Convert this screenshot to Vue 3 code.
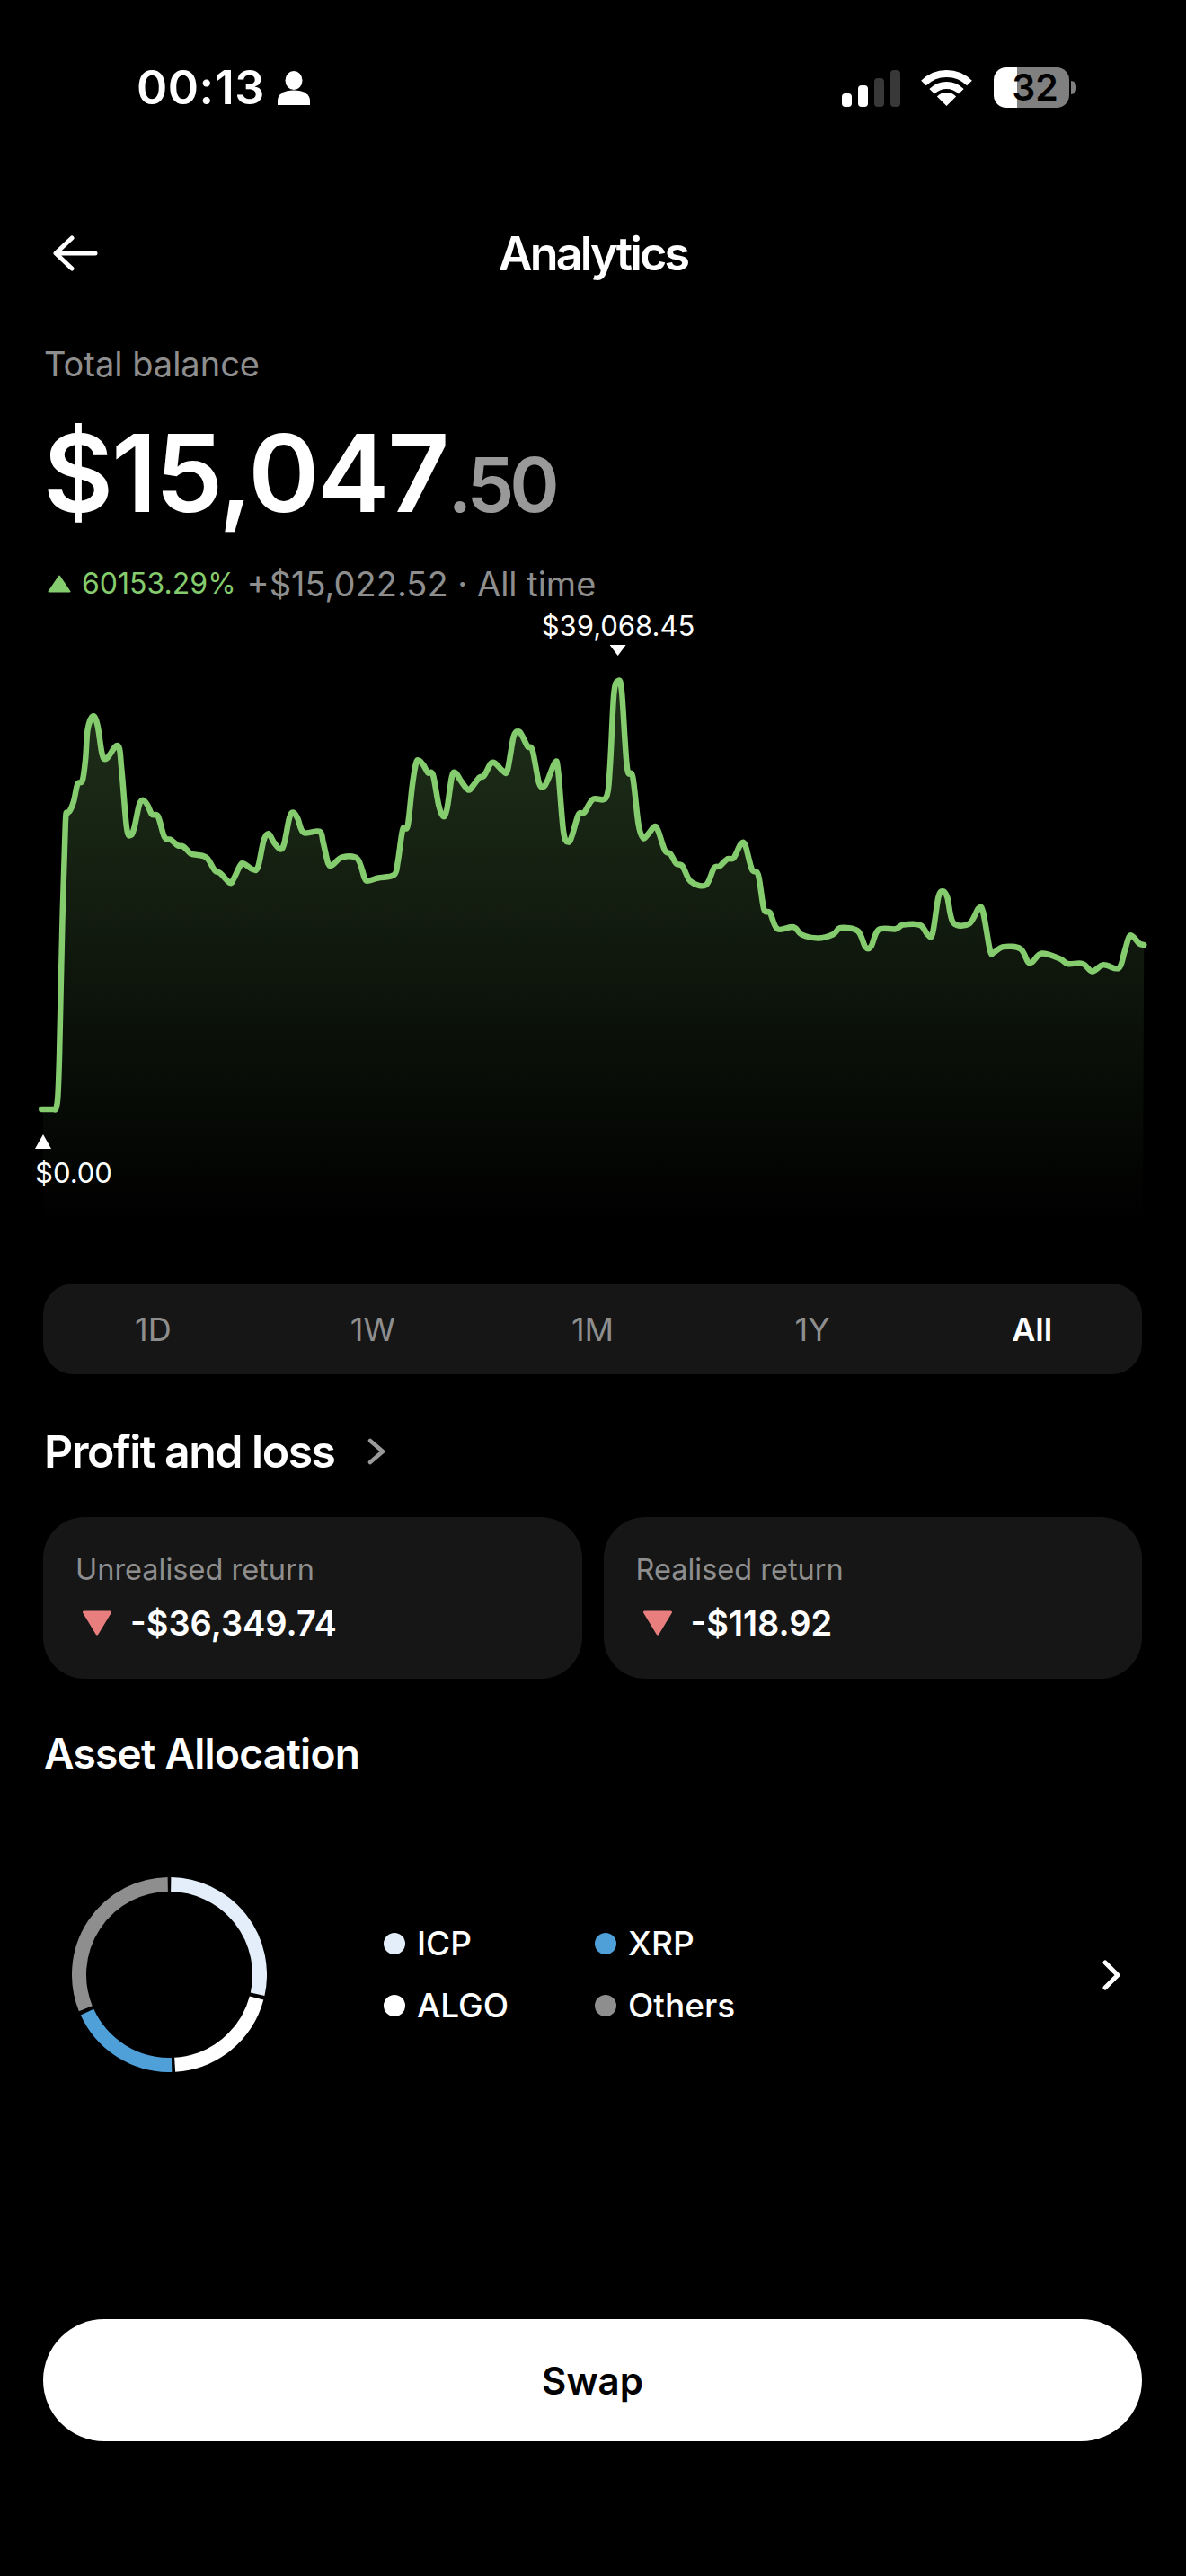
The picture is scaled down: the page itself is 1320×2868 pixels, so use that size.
<template>
  <div class="page">
    <header class="status">
      <div class="status-left">
        <span class="clock">00:13</span>
        <svg class="person" viewBox="0 0 36 38" width="36" height="38">
          <ellipse cx="18" cy="10.5" rx="9.5" ry="10.5" fill="#fff" />
          <path d="M0 38V33C0 26 7 21.5 18 21.5S36 26 36 33V38Z" fill="#fff" />
        </svg>
      </div>
      <div class="status-right">
        <div class="signal">
          <i class="bar on b1"></i>
          <i class="bar on b2"></i>
          <i class="bar b3"></i>
          <i class="bar b4"></i>
        </div>
        <svg class="wifi" viewBox="0 0 57 41" width="57" height="41">
          <path d="M3 15.5A36 36 0 0 1 54 15.5" fill="none" stroke="#fff" stroke-width="8" />
          <path d="M12.2 24.7A23 23 0 0 1 44.8 24.7" fill="none" stroke="#fff" stroke-width="8" />
          <path d="M28.5 41L17.9 30.4A15 15 0 0 1 39.1 30.4Z" fill="#fff" />
        </svg>
        <div class="battery">
          <div class="battery-body"><span>32</span></div>
          <i class="battery-nub"></i>
        </div>
      </div>
    </header>

    <nav class="nav">
      <svg class="back" viewBox="0 0 50 40" width="50" height="40">
        <path d="M47 20H4M21 3L3 20L21 37" fill="none" stroke="#fff" stroke-width="5" stroke-linecap="round" stroke-linejoin="round" />
      </svg>
      <h1 class="title">Analytics</h1>
    </nav>

    <div class="balance-label">Total balance</div>
    <div class="balance"><span>$15,047</span><span class="cents">.50</span></div>
    <div class="change">
      <svg viewBox="0 0 26 20" width="26" height="20">
        <path d="M13 1.5L24.5 18.5H1.5Z" fill="#85cc6e" stroke="#85cc6e" stroke-width="2" stroke-linejoin="round" />
      </svg>
      <span class="pct">60153.29%</span>
      <span class="abs">+$15,022.52 · All time</span>
    </div>

    <div class="chart">
      <svg viewBox="0 0 1320 710" width="1320" height="710">
        <defs>
          <linearGradient id="area" x1="0" y1="0" x2="0" y2="1">
            <stop offset="0" stop-color="#85cc6e" stop-opacity="0.24" />
            <stop offset="1" stop-color="#85cc6e" stop-opacity="0" />
          </linearGradient>
        </defs>
        <path :d="areaPath" fill="url(#area)" />
        <path :d="linePath" fill="none" stroke="#85cc6e" stroke-width="6.5" stroke-linecap="round" stroke-linejoin="round" />
      </svg>
      <div class="marker high">
        <span>$39,068.45</span>
        <svg viewBox="0 0 18 12" width="18" height="12"><path d="M0 0H18L9 12Z" fill="#fff" /></svg>
      </div>
      <div class="marker low">
        <svg viewBox="0 0 18 16" width="18" height="16"><path d="M0 16H18L9 0Z" fill="#fff" /></svg>
        <span>$0.00</span>
      </div>
    </div>

    <div class="ranges">
      <span v-for="r in ranges" :key="r" :class="{ active: r === 'All' }">{{ r }}</span>
    </div>

    <div class="section-head profit">
      <h2>Profit and loss</h2>
      <svg viewBox="0 0 20 30" width="20" height="30">
        <path d="M3 3L17 15L3 27" fill="none" stroke="#999" stroke-width="4.5" stroke-linecap="round" stroke-linejoin="round" />
      </svg>
    </div>

    <div class="cards">
      <div v-for="c in returns" :key="c.label" class="card">
        <div class="card-label">{{ c.label }}</div>
        <div class="card-value">
          <svg viewBox="0 0 34 28" width="34" height="28">
            <path d="M2.5 2H31.5L17 26Z" fill="#e87e7e" stroke="#e87e7e" stroke-width="3" stroke-linejoin="round" />
          </svg>
          <span>{{ c.value }}</span>
        </div>
      </div>
    </div>

    <div class="section-head asset">
      <h2>Asset Allocation</h2>
    </div>

    <div class="allocation">
      <svg class="donut" viewBox="0 0 217 217" width="217" height="217">
        <path v-for="s in segments" :key="s.color" :d="s.d" :stroke="s.color" fill="none" stroke-width="16" />
      </svg>
      <div class="legend">
        <div v-for="l in legend" :key="l.name" class="legend-item">
          <i :style="{ background: l.color }"></i>
          <span>{{ l.name }}</span>
        </div>
      </div>
      <svg class="more" viewBox="0 0 20 34" width="20" height="34">
        <path d="M3 3L17 17L3 31" fill="none" stroke="#fff" stroke-width="5" stroke-linecap="round" stroke-linejoin="round" />
      </svg>
    </div>

    <button class="swap">Swap</button>
  </div>
</template>

<script setup>
const ranges = ['1D', '1W', '1M', '1Y', 'All']

const returns = [
  { label: 'Unrealised return', value: '-$36,349.74' },
  { label: 'Realised return', value: '-$118.92' }
]

const legend = [
  { name: 'ICP', color: '#e4eefa' },
  { name: 'XRP', color: '#4f9fd8' },
  { name: 'ALGO', color: '#ffffff' },
  { name: 'Others', color: '#8e8e8e' }
]

// chart points traced from the two halves of the reference
const leftHalf = [
  [110,1295],[125,1295],[140,1295],[148,1293],[153,1260],[157,1150],[165,800],[173,540],[178,512],[185,505],[195,480],[205,435],[218,425],[226,370],[232,290],[246,255],
  [258,280],[270,355],[282,367],[312,333],[322,400],[335,550],[346,570],[355,550],[368,490],[378,477],
  [390,490],[402,515],[418,520],[435,575],[452,582],[470,597],[485,600],[505,619],[522,622],[547,630],
  [568,663],[582,670],[608,696],[618,685],[635,650],[645,645],[668,660],[682,655],[697,585],[710,566],
  [725,590],[742,607],[752,590],[765,525],[775,510],[787,525],[803,563],[845,560],[855,590],[868,645],
  [880,648],[905,628],[945,632],[965,685],[975,690],[1000,683],[1042,675],[1052,640],[1065,555],[1078,545],
  [1090,440],[1100,380],[1108,372],[1120,385],[1132,405],[1145,410],[1160,490],[1172,520],[1182,500],[1195,415],
  [1205,405],[1218,425],[1238,450],[1250,440],[1268,417],[1280,413],[1298,380],[1310,380],[1330,400],[1342,398],
  [1358,310],[1370,295],[1380,305],[1395,335],[1408,345],[1425,430],[1437,442],[1448,425],[1468,377],[1476,400],
  [1490,560],[1503,588],[1513,570],[1530,515],[1545,510],[1568,475]
]
const rightHalf = [
  [35,470],[45,390],[55,200],[66,162],[76,190],[90,390],[105,415],[120,540],[132,577],[145,568],
  [163,547],[173,560],[190,610],[205,620],[220,645],[237,652],[258,692],[298,702],[320,657],[335,652],
  [355,633],[372,630],[390,595],[402,595],[420,660],[437,675],[452,765],[468,775],[488,818],[530,813],
  [552,833],[595,842],[635,832],[655,815],[700,823],[720,865],[735,865],[755,820],[800,818],[820,807],
  [865,808],[885,833],[898,830],[913,735],[925,718],[937,735],[953,802],[995,804],[1020,763],[1032,775],
  [1050,875],[1060,880],[1085,865],[1130,870],[1150,905],[1162,905],[1187,883],[1235,897],[1255,910],[1295,910],
  [1320,930],[1350,913],[1390,922],[1405,880],[1418,838],[1430,840],[1445,857],[1457,860]
]

const scale = 2.376
const points = [
  ...leftHalf.map(([x, y]) => [x / scale, y / scale]),
  ...rightHalf.map(([x, y]) => [660 + x / scale, y / scale])
]

function smooth(pts) {
  let d = `M${pts[0][0].toFixed(1)} ${pts[0][1].toFixed(1)}`
  for (let i = 0; i < pts.length - 1; i++) {
    const p0 = pts[i - 1] || pts[i]
    const p1 = pts[i]
    const p2 = pts[i + 1]
    const p3 = pts[i + 2] || p2
    const c1x = p1[0] + (p2[0] - p0[0]) / 6
    const c1y = p1[1] + (p2[1] - p0[1]) / 6
    const c2x = p2[0] - (p3[0] - p1[0]) / 6
    const c2y = p2[1] - (p3[1] - p1[1]) / 6
    d += `C${c1x.toFixed(1)} ${c1y.toFixed(1)} ${c2x.toFixed(1)} ${c2y.toFixed(1)} ${p2[0].toFixed(1)} ${p2[1].toFixed(1)}`
  }
  return d
}

const linePath = smooth(points)
const areaPath = `${linePath}L1272 670L48 670L48 ${points[0][1].toFixed(1)}Z`

function arc(from, to) {
  const r = 100.5
  const c = 108.5
  const pt = a => {
    const t = (a * Math.PI) / 180
    return `${(c + r * Math.sin(t)).toFixed(2)} ${(c - r * Math.cos(t)).toFixed(2)}`
  }
  const large = to - from > 180 ? 1 : 0
  return `M${pt(from)}A${r} ${r} 0 ${large} 1 ${pt(to)}`
}

const segments = [
  { color: '#e4eefa', d: arc(1, 102.5) },
  { color: '#ffffff', d: arc(105, 176.5) },
  { color: '#4f9fd8', d: arc(178.5, 245.5) },
  { color: '#8e8e8e', d: arc(248, 359) }
]
</script>

<style scoped>
.page {
  width: 1320px;
  height: 2868px;
  background: #000;
  color: #fff;
  font-family: Inter, "Liberation Sans", sans-serif;
  overflow: hidden;
}

.status {
  height: 195px;
  display: flex;
  align-items: center;
  justify-content: space-between;
  padding: 0 122px 0 152px;
}

.status-left {
  display: flex;
  align-items: center;
  gap: 14px;
}

.clock {
  font-size: 52px;
  font-weight: 600;
  line-height: 60px;
  letter-spacing: 0.5px;
}

.status-right {
  display: flex;
  align-items: center;
}

.signal {
  display: flex;
  align-items: flex-end;
  gap: 7px;
  height: 41px;
  margin-top: 1px;
}

.bar {
  display: block;
  width: 11px;
  border-radius: 4px;
  background: #383838;
}
.bar.on { background: #fff; }
.b1 { height: 15px; }
.b2 { height: 24px; }
.b3 { height: 32px; }
.b4 { height: 41px; }

.wifi {
  margin-left: 23px;
}

.battery {
  display: flex;
  align-items: center;
  margin-left: 24px;
}

.battery-body {
  width: 84px;
  height: 45px;
  border-radius: 14px;
  background: linear-gradient(90deg, #fff 0 26px, #808080 26px);
  display: flex;
  align-items: center;
  justify-content: center;
}

.battery-body span {
  color: #000;
  font-size: 41px;
  font-weight: 600;
  line-height: 45px;
  margin-left: 8px;
}

.battery-nub {
  display: block;
  width: 6px;
  height: 15px;
  margin-left: 2px;
  border-radius: 0 6px 6px 0;
  background: #808080;
}

.nav {
  position: relative;
  height: 85px;
  margin-top: 45px;
  display: flex;
  align-items: center;
  justify-content: center;
}

.back {
  position: absolute;
  left: 59px;
  top: 22px;
}

.title {
  margin: 0;
  font-size: 52px;
  font-weight: 600;
  line-height: 85px;
  letter-spacing: -2.8px;
}

.balance-label {
  margin: 60px 0 0 49px;
  font-size: 38px;
  line-height: 40px;
  color: #8e8e8e;
}

.balance {
  margin: 42px 0 0 48px;
  font-size: 120px;
  font-weight: 600;
  line-height: 120px;
  letter-spacing: -2px;
  white-space: nowrap;
}

.cents {
  font-size: 84px;
  line-height: 1;
  letter-spacing: -5px;
  color: #999;
}

.change {
  display: flex;
  align-items: center;
  height: 40px;
  margin: 43px 0 0 53px;
}

.pct {
  margin-left: 12px;
  font-size: 32px;
  line-height: 40px;
  color: #85cc6e;
}

.abs {
  margin-left: 12px;
  font-size: 38px;
  line-height: 40px;
  color: #8e8e8e;
}

.chart {
  position: relative;
  width: 1320px;
  height: 710px;
  margin-top: 20px;
}

.chart > svg {
  display: block;
}

.marker {
  position: absolute;
  display: flex;
  flex-direction: column;
  font-size: 31px;
  line-height: 36px;
  white-space: nowrap;
}

.marker svg {
  display: block;
}

.high {
  left: 688px;
  top: -11px;
  transform: translateX(-50%);
  align-items: center;
  gap: 3px;
}

.low {
  left: 39px;
  top: 573px;
  align-items: flex-start;
  gap: 9px;
}

.ranges {
  display: grid;
  grid-template-columns: repeat(5, 1fr);
  align-items: center;
  justify-items: center;
  height: 101px;
  margin: 29px 49px 0 48px;
  border-radius: 34px;
  background: #161616;
  font-size: 36px;
  color: #8e8e8e;
}

.ranges .active {
  color: #fff;
  font-weight: 600;
}

.section-head {
  display: flex;
  align-items: center;
  height: 60px;
  margin-left: 49px;
}

.section-head h2 {
  margin: 0;
  font-weight: 600;
  line-height: 60px;
}

.profit {
  margin-top: 56px;
  gap: 36px;
}

.profit h2 {
  font-size: 50px;
  letter-spacing: -1.5px;
}

.asset {
  margin-top: 53px;
}

.asset h2 {
  font-size: 46px;
  letter-spacing: -0.7px;
}

.cards {
  display: grid;
  grid-template-columns: 1fr 1fr;
  gap: 24px;
  margin: 43px 49px 0 48px;
}

.card {
  height: 180px;
  padding: 37px 36px 0;
  box-sizing: border-box;
  border-radius: 46px;
  background: #161616;
}

.card-label {
  font-size: 32.5px;
  line-height: 44px;
  color: #8e8e8e;
}

.card-value {
  display: flex;
  align-items: center;
  gap: 20px;
  height: 44px;
  margin: 15px 0 0 7px;
  font-size: 38px;
  font-weight: 600;
  line-height: 44px;
}

.allocation {
  display: flex;
  align-items: center;
  height: 217px;
  margin-top: 108px;
  padding: 0 73px 0 80px;
}

.donut {
  flex: none;
}

.legend {
  display: grid;
  grid-template-columns: 235px 235px;
  row-gap: 25px;
  margin-left: 130px;
}

.legend-item {
  display: flex;
  align-items: center;
  gap: 13px;
  font-size: 37px;
  font-weight: 500;
  line-height: 44px;
}

.legend-item i {
  display: block;
  width: 24px;
  height: 24px;
  border-radius: 50%;
}

.more {
  margin-left: auto;
}

.swap {
  display: block;
  width: 1223px;
  height: 136px;
  margin: 275px 0 0 48px;
  border: 0;
  border-radius: 68px;
  background: #fff;
  color: #000;
  font-family: inherit;
  font-size: 42px;
  font-weight: 600;
}
</style>

<style>
html, body {
  margin: 0;
  background: #000;
}
</style>
